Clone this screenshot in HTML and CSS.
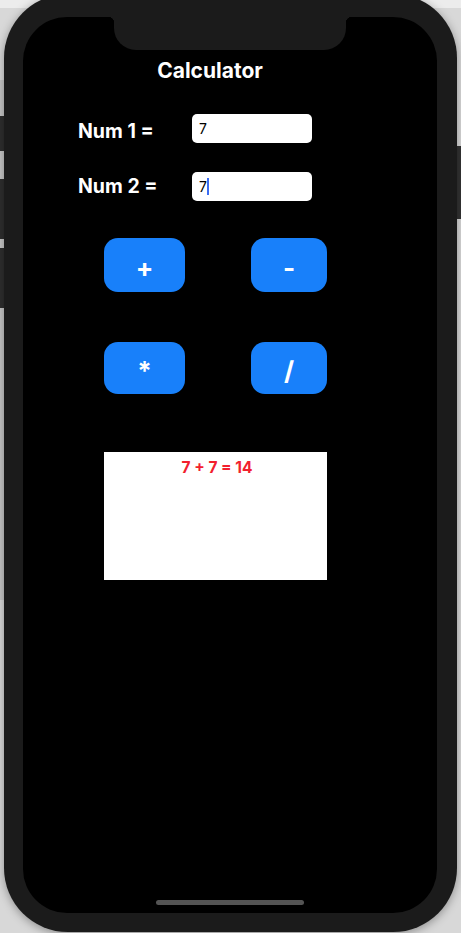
FILE: index.html
```html
<!DOCTYPE html>
<html lang="en">
<head>
<meta charset="utf-8">
<title>Calculator</title>
<link rel="stylesheet" href="styles.css">
</head>
<body>
<div class="device">
  <div class="screen">
    <div class="notch"></div>
    <h1 class="title">Calculator</h1>
    <div class="row row-first">
      <span class="label label-first">Num 1 =</span>
      <div class="field"><span>7</span></div>
    </div>
    <div class="row row-second">
      <span class="label label-second">Num 2 =</span>
      <div class="field"><span>7</span><span class="caret"></span></div>
    </div>
    <div class="ops ops-first">
      <button class="op op-left">+</button>
      <button class="op op-right">-</button>
    </div>
    <div class="ops ops-second">
      <button class="op op-left">*</button>
      <button class="op op-right">/</button>
    </div>
    <div class="result"><p class="result-text">7 + 7 = 14</p></div>
    <div class="home"></div>
  </div>
</div>
</body>
</html>
```

FILE: styles.css
```css
* { box-sizing: border-box; }

html, body {
  margin: 0;
  height: 933px;
  overflow: hidden;
}

body {
  font-family: Inter, "Noto Sans", sans-serif;
  background-color: #d8d8d8;
  background-image:
    linear-gradient(#2e2e2e, #2e2e2e),
    linear-gradient(#2e2e2e, #2e2e2e),
    linear-gradient(#2e2e2e, #2e2e2e),
    linear-gradient(#333333, #333333),
    linear-gradient(#ececec, #ececec),
    linear-gradient(#c6c6c6, #c6c6c6);
  background-size: 4px 35px, 4px 60px, 4px 60px, 6px 73px, 100% 8px, 5px 520px;
  background-position: 0 116px, 0 179px, 0 248px, 455px 146px, 0 0, 0 80px;
  background-repeat: no-repeat;
}

.device {
  width: 453px;
  height: 938px;
  margin: -6px 0 0 4px;
  padding: 23px 20px 19px 19px;
  background: #1b1b1b;
  border-radius: 64px;
  box-shadow: 0 2px 10px rgba(0, 0, 0, 0.35);
}

.screen {
  position: relative;
  width: 414px;
  height: 896px;
  background: #000;
  border-radius: 44px;
  overflow: hidden;
  display: flex;
  flex-direction: column;
  align-items: flex-start;
  padding-top: 42px;
}

.notch {
  position: absolute;
  top: 0;
  left: 91px;
  width: 232px;
  height: 33px;
  background: #1b1b1b;
  border-radius: 0 0 22px 22px;
}

.notch::before,
.notch::after {
  content: "";
  position: absolute;
  top: 0;
  width: 6px;
  height: 6px;
}

.notch::before {
  left: -6px;
  background: radial-gradient(circle at 0 100%, transparent 6px, #1b1b1b 6.5px);
}

.notch::after {
  right: -6px;
  background: radial-gradient(circle at 100% 100%, transparent 6px, #1b1b1b 6.5px);
}

.title {
  align-self: stretch;
  margin: 0;
  padding-right: 40px;
  text-align: center;
  color: #fff;
  font-size: 21px;
  line-height: 24px;
  font-weight: 700;
}

.row {
  display: flex;
  align-items: flex-start;
  margin-left: 55px;
  height: 29px;
}

.row-first { margin-top: 31px; }
.row-second { margin-top: 29px; }

.label {
  width: 114px;
  color: #fff;
  font-size: 19.5px;
  line-height: 23px;
  font-weight: 700;
}

.label-first { margin-top: 6px; }
.label-second { margin-top: 3px; }

.field {
  width: 120px;
  height: 29px;
  background: #fff;
  border-radius: 5px;
  padding-left: 7px;
  display: flex;
  align-items: center;
  color: #000;
  font-size: 14px;
  line-height: 29px;
  font-weight: 400;
}

.caret {
  width: 2px;
  height: 17px;
  background: #3b6cf2;
}

.ops {
  display: flex;
  gap: 66px;
  margin-left: 81px;
}

.ops-first { margin-top: 37px; }
.ops-second { margin-top: 50px; }

.op {
  border: none;
  margin: 0;
  background: #1880fa;
  color: #fff;
  border-radius: 14px;
  font-family: Inter, "Noto Sans", sans-serif;
  font-size: 26px;
  font-weight: 700;
  display: flex;
  align-items: center;
  justify-content: center;
  padding: 4px 0 0;
  height: 54px;
}

.ops-second .op { height: 52px; }

.op-left { width: 81px; }
.op-right { width: 76px; }

.result {
  margin: 58px 0 0 81px;
  width: 223px;
  height: 128px;
  background: #fff;
  padding-top: 7px;
  padding-left: 3px;
  text-align: center;
}

.result-text {
  margin: 0;
  color: #f2202e;
  font-size: 15.5px;
  line-height: 18px;
  font-weight: 700;
}

.home {
  margin-top: auto;
  margin-bottom: 8px;
  align-self: center;
  width: 148px;
  height: 5px;
  border-radius: 3px;
  background: #545454;
}
```
